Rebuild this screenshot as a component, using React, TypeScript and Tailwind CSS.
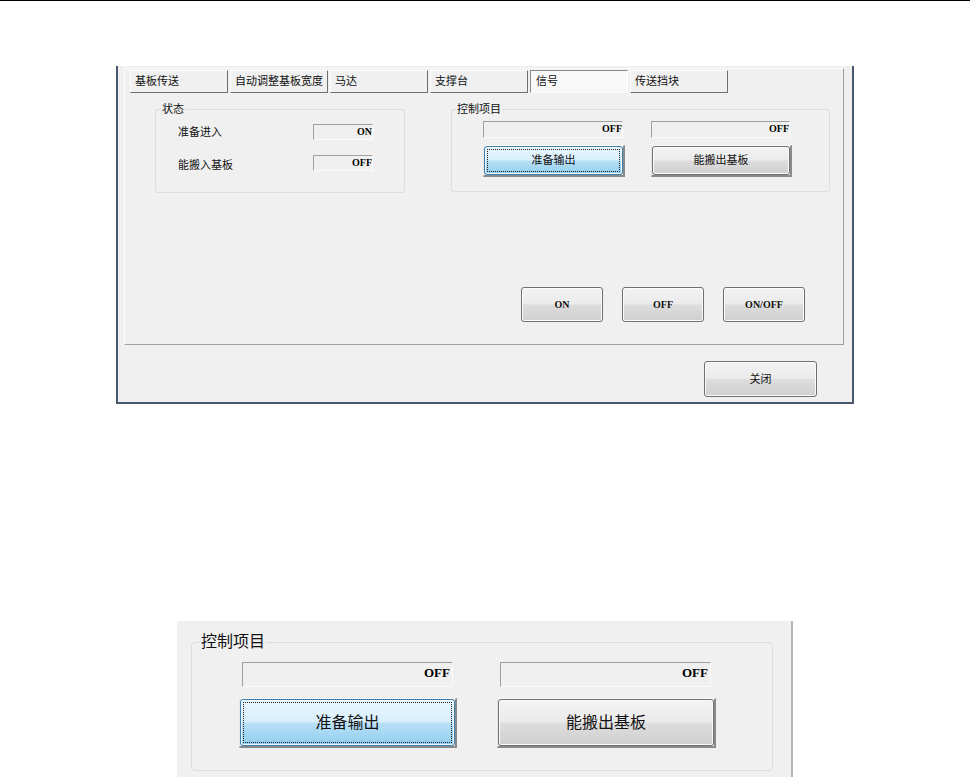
import React from "react";

const tabs = ["基板传送", "自动调整基板宽度", "马达", "支撑台", "信号", "传送挡块"];

const normalFace =
  "rounded-[3px] border border-[#707070] bg-[linear-gradient(180deg,#f3f3f3_0%,#ebebeb_48%,#dddddd_52%,#cfcfcf_100%)] shadow-[inset_0_0_0_1px_#fbfbfb]";
const focusFace =
  "rounded-[3px] border border-[#3c7fb1] bg-[linear-gradient(180deg,#e9f6fd_0%,#d7effc_48%,#b9e1f7_52%,#8fccee_100%)] shadow-[inset_0_0_0_1px_#eef8fe]";

const Tab = ({ label, active }: { label: string; active?: boolean }) => (
  <div
    className={
      active
        ? "w-[98px] h-[23px] flex items-center pl-[5px] border border-t-[#8c8c8c] border-l-[#8c8c8c] border-r-[#fdfdfd] border-b-[#fdfdfd] bg-[#f8f8f8]"
        : "w-[98px] h-[23px] flex items-center pl-[4px] border border-t-[#fdfdfd] border-l-[#fdfdfd] border-r-[#6e6e6e] border-b-[#6e6e6e] bg-[#f0f0f0]"
    }
  >
    {label}
  </div>
);

const Readout = ({ value, className }: { value: string; className: string }) => (
  <div
    className={`flex justify-end border border-t-[#a0a0a0] border-l-[#a0a0a0] border-r-[#fbfbfb] border-b-[#fbfbfb] bg-[#f0f0f0] font-['Liberation_Serif',serif] font-bold text-black ${className}`}
  >
    {value}
  </div>
);

// raised frame that wraps the win7 face in the control group
const FramedButton = ({
  label,
  focused,
  className,
}: {
  label: string;
  focused?: boolean;
  className: string;
}) => (
  <div className={`flex border-t border-l border-t-[#f8f8f8] border-l-[#e6e6e6] border-r-2 border-b-2 border-r-[#8a8a8a] border-b-[#8a8a8a] ${className}`}>
    <div className={`flex-1 p-[2px] ${focused ? focusFace : normalFace}`}>
      <div
        className={
          focused
            ? "h-full flex items-center justify-center border border-dotted border-[#202020]"
            : "h-full flex items-center justify-center"
        }
      >
        {label}
      </div>
    </div>
  </div>
);

export default function App() {
  return (
    <div className="w-[970px] h-[777px] overflow-hidden bg-white text-[#111] font-['Liberation_Sans','Noto_Sans_CJK_SC',sans-serif]">
      <div className="h-px bg-black" />

      {/* dialog */}
      <div className="ml-[116px] mt-[65px] w-[738px] h-[338px] flex flex-col bg-[#f0f0f0] border-l-2 border-r-2 border-b-2 border-[#4a5a6e] text-[11px]">
        <div className="ml-[6px] mt-[2px] w-[720px] h-[277px] flex flex-col border border-t-[#fbfbfb] border-l-[#fbfbfb] border-r-[#a0a0a0] border-b-[#a0a0a0]">
          <div className="flex gap-[2px] pl-[5px] pt-[1px]">
            {tabs.map((t) => (
              <Tab key={t} label={t} active={t === "信号"} />
            ))}
          </div>

          <div className="flex items-start mt-[10px] ml-[30px]">
            <fieldset className="w-[250px] border border-[#d5dfe5] rounded-[3px]">
              <legend className="ml-[5px] px-[1px] leading-[12px]">状态</legend>
              <div className="pb-[19px] pr-[31px]">
                <div className="flex items-center pt-[9px]">
                  <span className="flex-1 pl-[22px]">准备进入</span>
                  <Readout value="ON" className="w-[60px] h-[16px] text-[10px] leading-[14px]" />
                </div>
                <div className="flex items-center mt-[13px]">
                  <span className="flex-1 pl-[22px] pt-[3px]">能搬入基板</span>
                  <Readout value="OFF" className="w-[60px] h-[16px] text-[10px] leading-[14px]" />
                </div>
              </div>
            </fieldset>

            <fieldset className="ml-[46px] w-[379px] border border-[#d5dfe5] rounded-[3px]">
              <legend className="ml-[4px] px-[1px] leading-[12px]">控制项目</legend>
              <div className="flex gap-[26px] pt-[6px] pl-[31px] pb-[14px]">
                <div className="flex flex-col w-[142px]">
                  <Readout value="OFF" className="w-[140px] h-[17px] text-[10px] leading-[14px]" />
                  <FramedButton label="准备输出" focused className="mt-[7px] h-[32px]" />
                </div>
                <div className="flex flex-col w-[141px]">
                  <Readout value="OFF" className="w-[139px] h-[17px] text-[10px] leading-[14px]" />
                  <FramedButton label="能搬出基板" className="mt-[7px] h-[32px]" />
                </div>
              </div>
            </fieldset>
          </div>

          <div className="flex justify-end gap-[19px] pr-[38px] mt-[94px] font-['Liberation_Serif',serif] font-bold text-[10px]">
            {["ON", "OFF", "ON/OFF"].map((b) => (
              <button key={b} className={`w-[82px] h-[35px] flex items-center justify-center ${normalFace}`}>
                {b}
              </button>
            ))}
          </div>
        </div>

        <div className="flex justify-end pr-[35px] mt-[16px]">
          <button className={`w-[113px] h-[36px] flex items-center justify-center ${normalFace}`}>关闭</button>
        </div>
      </div>

      {/* enlarged crop of the control group */}
      <div className="ml-[177px] mt-[217px] w-[616px] h-[156px] bg-[#f0f0f0] border-r-2 border-[#b4b4b4] pl-[14px] pt-[12px]">
        <fieldset className="w-[582px] border border-[#d5dfe5] rounded-[4px]">
          <legend className="ml-[8px] px-[1px] text-[16px] leading-[18px]">控制项目</legend>
          <div className="flex gap-[40px] pt-[11px] pl-[47px] pb-[22px]">
            <div className="flex flex-col w-[218px]">
              <Readout value="OFF" className="ml-[3px] w-[211px] h-[25px] pr-[2px] text-[13px] leading-[20px]" />
              <FramedButton label="准备输出" focused className="mt-[11px] h-[50px] text-[16px]" />
            </div>
            <div className="flex flex-col w-[219px]">
              <Readout value="OFF" className="ml-[3px] w-[211px] h-[25px] pr-[2px] text-[13px] leading-[20px]" />
              <FramedButton label="能搬出基板" className="mt-[11px] h-[50px] text-[16px]" />
            </div>
          </div>
        </fieldset>
      </div>
    </div>
  );
}
